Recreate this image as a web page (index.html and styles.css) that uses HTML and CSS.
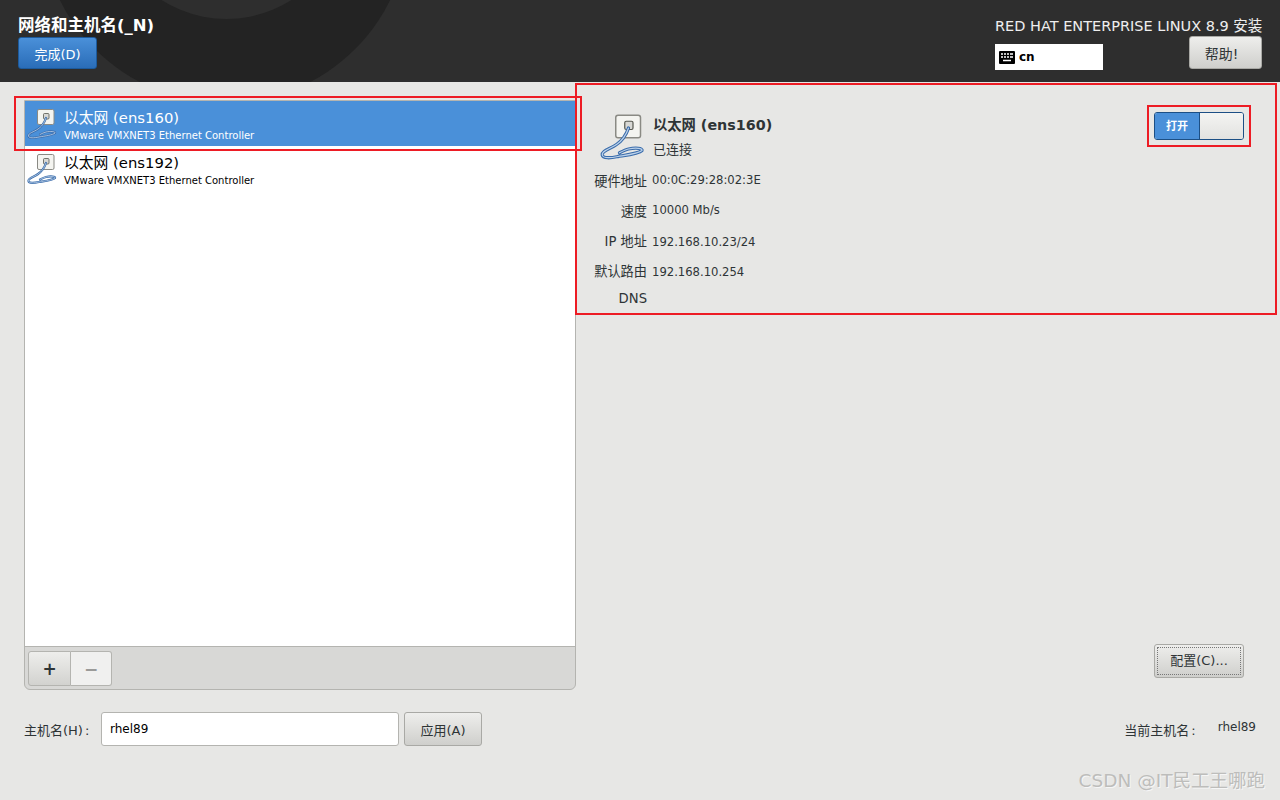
FILE: index.html
```html
<!DOCTYPE html>
<html lang="zh-CN">
<head>
    <meta charset="UTF-8">
    <title>网络和主机名</title>
    <link rel="stylesheet" href="styles.css">
</head>
<body>
    <svg class="defs" width="0" height="0">
        <symbol id="eth" viewBox="0 0 32 36">
            <rect x="10.5" y="1.5" width="16.500" height="15" rx="1.5" fill="#f4f4f0" stroke="#8a8a84"/>
            <rect x="16.500" y="5.500" width="5.500" height="5.500" rx="1" fill="#d8d8d4" stroke="#55574f" stroke-width="0.800"/>
            <path d="M19 10 C17 16 14 19 11 21 C7 24 1 25 1.500 28 C2 30.500 7 30 12 29 C18 28 26 27 28 25 C28.500 23.500 24 23 19 24 C17 24.500 15 25.500 13 26.500" fill="none" stroke="#3a6cab" stroke-width="2.200" stroke-linecap="round" stroke-linejoin="round"/>
            <path d="M19 10 C17 16 14 19 11 21 C7 24 1 25 1.500 28 C2 30.500 7 30 12 29 C18 28 26 27 28 25 C28.500 23.500 24 23 19 24 C17 24.500 15 25.500 13 26.500" fill="none" stroke="#bcd2ea" stroke-width="0.800" stroke-linecap="round" stroke-linejoin="round"/>
        </symbol>
    </svg>

    <header class="topbar">
        <div class="deco deco-big"></div>
        <div class="deco deco-small"></div>
        <div class="topbar-left">
            <h1 class="page-title">网络和主机名(_N)</h1>
            <button class="btn btn-done">完成(D)</button>
        </div>
        <div class="topbar-right">
            <div class="product">RED HAT ENTERPRISE LINUX 8.9 安装</div>
            <div class="topbar-controls">
                <div class="layout-box">
                    <svg class="kbd" width="16" height="13" viewBox="0 0 16 13">
                        <rect width="16" height="13" rx="1" fill="#000"/>
                        <path d="M2 3h2M5 3h2M8 3h2M11 3h3M2 6h2M5 6h2M8 6h2M11 6h3M4 9.500h8" stroke="#fff" stroke-width="1.400"/>
                    </svg>
                    <span>cn</span>
                </div>
                <button class="btn btn-help">帮助!</button>
            </div>
        </div>
    </header>

    <main class="content">
        <div class="columns">
            <section class="device-panel">
                <ul class="device-list">
                    <li class="device selected">
                        <svg class="device-icon" width="32" height="36"><use href="#eth"/></svg>
                        <div>
                            <div class="device-name">以太网 (ens160)</div>
                            <div class="device-desc">VMware VMXNET3 Ethernet Controller</div>
                        </div>
                    </li>
                    <li class="device">
                        <svg class="device-icon" width="32" height="36"><use href="#eth"/></svg>
                        <div>
                            <div class="device-name">以太网 (ens192)</div>
                            <div class="device-desc">VMware VMXNET3 Ethernet Controller</div>
                        </div>
                    </li>
                </ul>
                <div class="list-toolbar">
                    <div class="btn-group">
                        <button class="tool-btn">+</button>
                        <button class="tool-btn disabled">−</button>
                    </div>
                </div>
            </section>

            <section class="detail-panel">
                <div class="detail-top">
                    <div class="detail-head">
                        <svg class="detail-icon" width="48" height="54"><use href="#eth"/></svg>
                        <div>
                            <div class="detail-name">以太网 (ens160)</div>
                            <div class="detail-state">已连接</div>
                        </div>
                    </div>
                    <div class="switch">
                        <div class="switch-on">打开</div>
                        <div class="switch-knob"></div>
                    </div>
                </div>
                <dl class="props">
                    <dt>硬件地址</dt><dd>00:0C:29:28:02:3E</dd>
                    <dt>速度</dt><dd>10000 Mb/s</dd>
                    <dt>IP 地址</dt><dd class="low">192.168.10.23/24</dd>
                    <dt>默认路由</dt><dd class="low">192.168.10.254</dd>
                    <dt>DNS</dt><dd></dd>
                </dl>
                <div class="detail-bottom">
                    <button class="btn btn-config"><span class="focus-ring">配置(C)...</span></button>
                </div>
            </section>
        </div>

        <div class="host-row">
            <label class="host-label">主机名(H)<span class="colon">:</span></label>
            <div class="host-input">rhel89</div>
            <button class="btn btn-apply">应用(A)</button>
            <div class="current-host">
                <span>当前主机名<span class="colon">:</span></span>
                <span class="current-value">rhel89</span>
            </div>
        </div>
    </main>

    <!-- annotations drawn on top of the screenshot -->
    <div class="mark mark-device"></div>
    <div class="mark mark-detail"></div>
    <div class="mark mark-switch"></div>
    <div class="watermark">CSDN @IT民工王哪跑</div>
</body>
</html>
```

FILE: styles.css
```css
* {
    box-sizing: border-box;
}
html, body {
    margin: 0;
    height: 100%;
}
body {
    width: 1280px;
    height: 800px;
    overflow: hidden;
    position: relative;
    background-color: #e7e7e5;
    color: #2e3436;
    font-family: "DejaVu Sans", "Noto Sans CJK SC", sans-serif;
    font-size: 13px;
}
.defs {
    position: absolute;
}
button {
    font-family: inherit;
    padding: 0;
}

/* top bar */
.topbar {
    height: 82px;
    background-color: #2e2e2e;
    position: relative;
    overflow: hidden;
    display: flex;
    justify-content: space-between;
    padding: 0 18px;
    color: #fff;
}
.deco {
    position: absolute;
    border-radius: 50%;
}
.deco-big {
    left: 41px;
    top: -265px;
    width: 368px;
    height: 368px;
    background-color: #232323;
}
.deco-small {
    left: 106px;
    top: -222px;
    width: 241px;
    height: 241px;
    background-color: #2e2e2e;
}
.topbar-left, .topbar-right {
    position: relative;
}
.page-title {
    margin: 15px 0 0;
    font-size: 16.500px;
    font-weight: bold;
    line-height: 21px;
}
.btn {
    border: 1px solid #a9a9a5;
    border-radius: 3px;
    background: linear-gradient(#eeeeec, #cfcfcc);
    color: #2e3436;
    font-size: 13px;
}
.btn-done {
    display: block;
    margin-top: 1px;
    width: 79px;
    height: 32px;
    border-color: #1c5a9c;
    background: linear-gradient(#4a90d9, #2a6db8);
    color: #fff;
}
.topbar-right {
    display: flex;
    flex-direction: column;
    width: 267px;
}
.product {
    margin-top: 16px;
    font-size: 14.500px;
    line-height: 20px;
    white-space: nowrap;
    color: #eee;
}
.topbar-controls {
    display: flex;
    justify-content: space-between;
    align-items: flex-start;
}
.layout-box {
    margin-top: 8px;
    width: 108px;
    height: 26px;
    background-color: #fff;
    color: #000;
    display: flex;
    align-items: center;
    gap: 4px;
    padding-left: 4px;
    font-size: 12px;
    font-weight: bold;
}
.btn-help {
    width: 73px;
    height: 33px;
    padding-right: 8px;
    font-size: 14px;
}

/* main area */
.content {
    padding: 18px 0 0 24px;
}
.columns {
    display: flex;
    height: 590px;
}
.device-panel {
    width: 552px;
    display: flex;
    flex-direction: column;
    border: 1px solid #b4b4b0;
    border-radius: 0 0 6px 6px;
    background-color: #d8d8d6;
}
.device-list {
    list-style: none;
    margin: 0;
    padding: 0;
    flex: 1;
    background-color: #fff;
    border-bottom: 1px solid #b4b4b0;
}
.device {
    display: flex;
    height: 45px;
    gap: 5px;
    padding: 7px 0 0 2px;
    color: #000;
}
.device.selected {
    background-color: #4a90d9;
    color: #fff;
}
.device-icon {
    flex: none;
}
.device-name {
    font-size: 14.800px;
    line-height: 20px;
}
.device-desc {
    font-size: 10px;
    line-height: 15px;
}
.list-toolbar {
    height: 42px;
    padding: 4px 3px;
}
.btn-group {
    display: flex;
    width: 84px;
    height: 35px;
}
.tool-btn {
    flex: 1;
    border: 1px solid #b4b4b0;
    border-radius: 3px 0 0 3px;
    background: linear-gradient(#eeeeec, #d2d2cf);
    color: #2e3436;
    font-size: 17px;
    font-weight: bold;
}
.tool-btn.disabled {
    flex: none;
    width: 41px;
    border-left: 0;
    border-radius: 0 3px 3px 0;
    background: #f0f0ef;
    color: #9a9a98;
}
.detail-panel {
    flex: 1;
    display: flex;
    flex-direction: column;
}
.detail-top {
    display: flex;
    justify-content: space-between;
    height: 63px;
    padding: 12px 36px 0 24px;
}
.detail-head {
    display: flex;
    gap: 5px;
}
.detail-icon {
    flex: none;
    margin-top: 1px;
}
.detail-name {
    font-size: 14.300px;
    font-weight: bold;
    line-height: 20px;
    margin-top: 3px;
}
.detail-state {
    margin-top: 6px;
    line-height: 18px;
}
.switch {
    display: flex;
    width: 90px;
    height: 28px;
    border: 1px solid #1c4f85;
    border-radius: 3px;
    overflow: hidden;
}
.switch-on {
    width: 44px;
    background-color: #4a90d9;
    color: #fff;
    font-size: 11px;
    font-weight: bold;
    text-align: center;
    line-height: 27px;
}
.switch-knob {
    flex: 1;
    border-left: 1px solid #1c4f85;
    background: linear-gradient(#f4f4f2, #e2e2e0);
}
.props {
    display: grid;
    grid-template-columns: 71px 1fr;
    grid-template-rows: 30px 30px 30px 27px 30px;
    column-gap: 5px;
    margin: 7px 0 0;
    font-size: 11.600px;
    line-height: 24px;
}
.props dt {
    text-align: right;
    font-size: 13.200px;
}
.props dd {
    margin: -2px 0 0;
}
.props dd.low {
    margin-top: 0;
}
.detail-bottom {
    margin-top: auto;
    display: flex;
    justify-content: flex-end;
    padding: 0 36px 12px 0;
}
.btn-config {
    width: 90px;
    height: 34px;
    padding: 2px;
}
.focus-ring {
    display: block;
    height: 100%;
    line-height: 26px;
    border: 1px dotted #777;
}
.host-row {
    display: flex;
    align-items: center;
    margin-top: 22px;
    height: 34px;
}
.host-label {
    width: 77px;
}
.colon {
    margin-left: 2px;
}
.host-input {
    width: 298px;
    height: 34px;
    border: 1px solid #b4b4b0;
    border-radius: 3px;
    background-color: #fff;
    padding: 0 8px;
    line-height: 32px;
    font-size: 12px;
    color: #000;
}
.btn-apply {
    margin-left: 5px;
    width: 78px;
    height: 34px;
}
.current-host {
    margin-left: auto;
    margin-right: 24px;
    display: flex;
    gap: 22px;
}
.current-value {
    font-size: 12px;
}

/* red annotation boxes, on top of the page */
.mark {
    position: absolute;
    border: 2px solid #ed1c24;
}
.mark-device {
    left: 14px;
    top: 96px;
    width: 568px;
    height: 55px;
}
.mark-detail {
    left: 575px;
    top: 83px;
    width: 702px;
    height: 232px;
}
.mark-switch {
    left: 1147px;
    top: 105px;
    width: 104px;
    height: 42px;
}
.watermark {
    position: absolute;
    right: 15px;
    top: 769px;
    font-size: 18.500px;
    line-height: 24px;
    color: #bdbdbb;
    text-shadow: 1px 1px 0 #f6f6f6;
}
```
